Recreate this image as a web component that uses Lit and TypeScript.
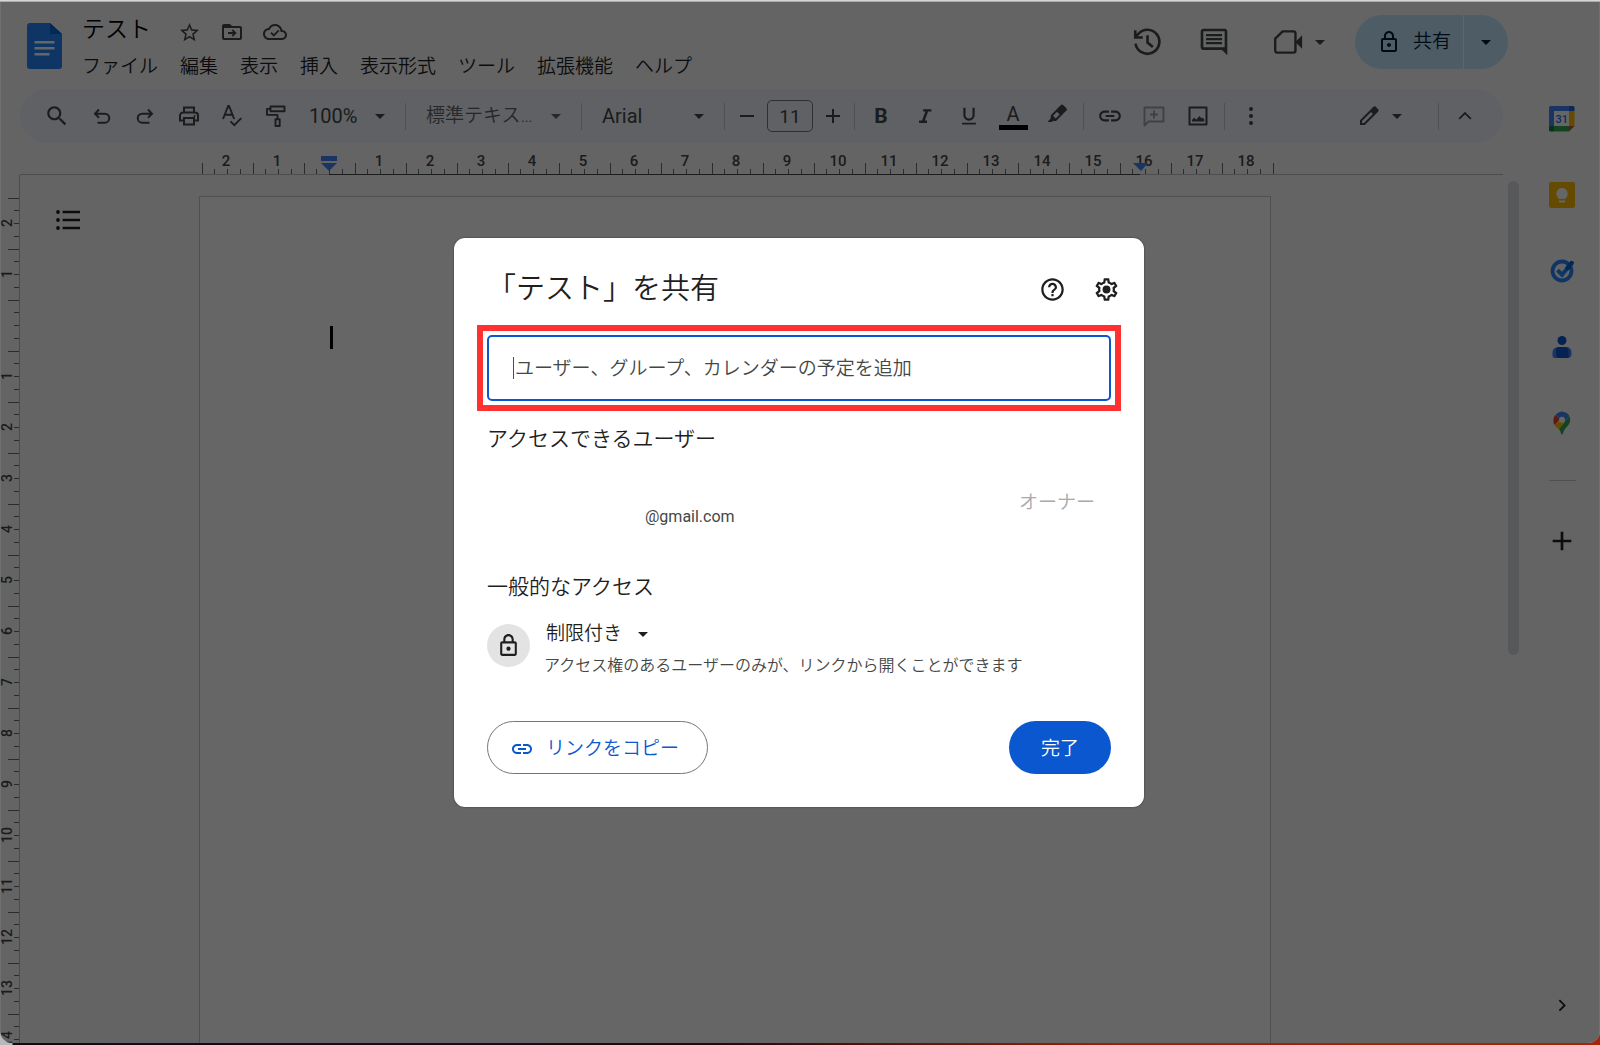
import { LitElement, html, css, svg, nothing } from "lit";
import type { SVGTemplateResult, TemplateResult } from "lit";
import { customElement } from "lit/decorators.js";

/* ---------- icon artwork, all on a 24-unit grid ---------- */

const glyphs: Record<string, SVGTemplateResult> = {
  star: svg`<path d="M22 9.24l-7.19-.62L12 2 9.19 8.63 2 9.24l5.46 4.73L5.82 21 12 17.27 18.18 21l-1.63-7.03L22 9.24zM12 15.4l-3.76 2.27 1-4.28-3.32-2.88 4.38-.38L12 6.1l1.71 4.04 4.38.38-3.32 2.88 1 4.28L12 15.4z"/>`,
  move: svg`<path d="M20 6h-8l-2-2H4c-1.1 0-2 .9-2 2v12c0 1.1.9 2 2 2h16c1.1 0 2-.9 2-2V8c0-1.1-.9-2-2-2zm0 12H4V8h16v10z"/><path class="line" stroke-width="1.8" d="M8 13h7M12.2 9.8l3.2 3.2-3.2 3.2"/>`,
  cloud: svg`<path d="M19.35 10.04C18.67 6.59 15.64 4 12 4 9.11 4 6.6 5.64 5.35 8.04 2.34 8.36 0 10.91 0 14c0 3.31 2.69 6 6 6h13c2.76 0 5-2.24 5-5 0-2.64-2.05-4.78-4.65-4.96zM19 18H6c-2.21 0-4-1.79-4-4 0-2.05 1.53-3.76 3.56-3.97l1.07-.11.5-.95C8.08 7.14 9.94 6 12 6c2.62 0 4.88 1.86 5.39 4.43l.3 1.5 1.53.11c1.56.1 2.78 1.41 2.78 2.96 0 1.65-1.35 3-3 3z"/><path class="line" stroke-width="1.8" d="M8 12.6l2.8 2.8 5-5"/>`,
  history: svg`<path class="line" stroke-width="2" d="M3.4 13.2A9 9 0 1 0 5.4 6L3.4 8.4M3.2 3.2v5.4h5.6M12.4 7v5.4l4 3.4"/>`,
  comment: svg`<path d="M21.99 4c0-1.1-.89-2-1.99-2H4c-1.1 0-2 .9-2 2v12c0 1.1.9 2 2 2h14l4 4-.01-18zM20 4v12H4V4h16zM6 12h12v1.6H6zm0-3h12v1.6H6zm0-3h12v1.6H6z"/>`,
  video: svg`<path class="line" stroke-width="1.8" stroke-linejoin="round" d="M8 4h8a1.6 1.6 0 0 1 1.6 1.6v12.8A1.6 1.6 0 0 1 16 20H4a1.6 1.6 0 0 1-1.600-1.600V9.500z"/><path d="M17.500 12L22.600 7v10z"/>`,
  lock: svg`<path d="M18 8h-1V6c0-2.76-2.24-5-5-5S7 3.24 7 6v2H6c-1.1 0-2 .9-2 2v10c0 1.1.9 2 2 2h12c1.1 0 2-.9 2-2V10c0-1.1-.9-2-2-2zM9 6c0-1.66 1.34-3 3-3s3 1.34 3 3v2H9V6zm9 14H6V10h12v10zm-6-3c1.1 0 2-.9 2-2s-.9-2-2-2-2 .9-2 2 .9 2 2 2z"/>`,
  caret: svg`<path d="M6 9.500h12l-6 6z"/>`,
  search: svg`<path d="M15.500 14h-.79l-.28-.27C15.410 12.590 16 11.110 16 9.500 16 5.910 13.090 3 9.500 3S3 5.910 3 9.500 5.910 16 9.500 16c1.610 0 3.090-.590 4.230-1.570l.27.28v.79l5 4.990L20.490 19l-4.990-5zm-6 0C7.010 14 5 11.990 5 9.500S7.010 5 9.500 5 14 7.010 14 9.500 11.990 14 9.500 14z"/>`,
  undo: svg`<path class="line" stroke-width="2" d="M10 5.500L6 9.700l4 4.200M6 9.700h9.800a4.400 4.400 0 0 1 0 9H8.500"/>`,
  redo: svg`<path class="line" stroke-width="2" d="M15 5.500l4 4.200-4 4.200M19 9.700H9.200a4.400 4.400 0 0 0 0 9h7.300"/>`,
  print: svg`<path class="line" stroke-width="2" d="M7 8.500V3.500h10v5M7 16.500H3v-5a3 3 0 0 1 3-3h12a3 3 0 0 1 3 3v5h-4M7 14h10v6.500H7z"/><circle cx="17.500" cy="12" r="1"/>`,
  spell: svg`<path class="line" stroke-width="1.900" d="M2 15L7.200 2h.8l5.200 13M4 10.800h7.200M9.500 17.300l3.800 3.800 7-7"/>`,
  roller: svg`<path class="line" stroke-width="1.900" stroke-linejoin="round" d="M5.500 2.500h14v4.800H5.500zM5.500 4.900H2v6h10.500v4.200M10.500 15.200h4.200v6.800h-4.200z"/>`,
  minus: svg`<path d="M5 11h14v2H5z"/>`,
  plus: svg`<path d="M19 13h-6v6h-2v-6H5v-2h6V5h2v6h6v2z"/>`,
  italic: svg`<path d="M10 4.500v2.600h2.400L8.800 16.900H5.500v2.600h8.700v-2.600h-2.400l3.600-9.800H19V4.500z"/>`,
  underline: svg`<path class="line" stroke-width="2.400" d="M7 3v8a5 5 0 0 0 10 0V3"/><path d="M4.500 19.300h15v1.900h-15z"/>`,
  marker: svg`<path fill-rule="evenodd" d="M15.600 1.200a2 2 0 0 1 2.800 0l2.800 2.800a2 2 0 0 1 0 2.800l-9.600 9.600a2 2 0 0 1-1.400.6H7.800L6.800 18H2.500l3.200-3.400v-2.300a2 2 0 0 1 .6-1.500zM12 7.800l-4 4 2.700 2.700 4-4z"/>`,
  link: svg`<path d="M3.900 12c0-1.710 1.390-3.100 3.100-3.100h4V7H7c-2.760 0-5 2.240-5 5s2.240 5 5 5h4v-1.900H7c-1.710 0-3.100-1.390-3.100-3.100zM8 13h8v-2H8v2zm9-6h-4v1.900h4c1.710 0 3.100 1.390 3.100 3.100s-1.390 3.100-3.100 3.100h-4V17h4c2.760 0 5-2.240 5-5s-2.240-5-5-5z"/>`,
  addComment: svg`<path class="line" stroke-width="1.900" stroke-linejoin="round" d="M2.500 21.500V3.500h19v14H6.500zM12 6.500v8M8 10.500h8"/>`,
  image: svg`<path class="line" stroke-width="2" stroke-linejoin="round" d="M3.500 3.500h17v17h-17z"/><path d="M6 17.500v-1.500l2.200-2.500 2 2.200 3.300-3.700 2.200 2.600 1-1 1.500 1.800v2.100z"/>`,
  more: svg`<circle cx="12" cy="5" r="2"/><circle cx="12" cy="12" r="2"/><circle cx="12" cy="19" r="2"/>`,
  pen: svg`<path fill-rule="evenodd" d="M3 21v-4.800L16.200 3a1.900 1.900 0 0 1 2.700 0l2.100 2.100a1.900 1.900 0 0 1 0 2.700L7.800 21zM5 19h2L15.900 10l-1.900-1.900L5 17z"/>`,
  up: svg`<path class="line" stroke-width="2.200" d="M5 15.500l7-7 7 7"/>`,
  right: svg`<path class="line" stroke-width="2.400" d="M8.500 5.500l7 7-7 7"/>`,
  outline: svg`<circle cx="2" cy="4" r="1.900"/><circle cx="2" cy="12" r="1.900"/><circle cx="2" cy="20" r="1.900"/><path d="M6.600 2.800H24v2.400H6.600zM6.600 10.800H24v2.400H6.600zM6.600 18.800H24v2.400H6.600z"/>`,
  help: svg`<path d="M11 18h2v-2h-2v2zm1-16C6.480 2 2 6.480 2 12s4.480 10 10 10 10-4.480 10-10S17.520 2 12 2zm0 18c-4.410 0-8-3.590-8-8s3.590-8 8-8 8 3.590 8 8-3.590 8-8 8zm0-14c-2.210 0-4 1.790-4 4h2c0-1.100.9-2 2-2s2 .9 2 2c0 2-3 1.750-3 5h2c0-2.250 3-2.500 3-5 0-2.210-1.790-4-4-4z"/>`,
  gear: svg`<path d="M19.430 12.980c.04-.32.07-.64.07-.98 0-.34-.03-.66-.07-.98l2.110-1.650c.19-.15.24-.42.12-.64l-2-3.460c-.09-.16-.26-.25-.44-.25-.06 0-.12.010-.17.030l-2.490 1c-.52-.4-1.080-.73-1.690-.98l-.38-2.650C14.460 2.180 14.250 2 14 2h-4c-.25 0-.46.18-.49.42l-.38 2.650c-.61.25-1.170.59-1.690.98l-2.490-1c-.06-.02-.12-.03-.18-.03-.17 0-.34.09-.43.25l-2 3.460c-.13.22-.07.49.12.64l2.110 1.650c-.04.32-.07.65-.07.98 0 .33.03.66.07.98l-2.110 1.650c-.19.15-.24.42-.12.64l2 3.460c.09.16.26.25.44.25.06 0 .12-.01.17-.03l2.490-1c.52.4 1.080.73 1.690.98l.38 2.650c.03.24.24.42.49.42h4c.25 0 .46-.18.49-.42l.38-2.650c.61-.25 1.170-.59 1.690-.98l2.490 1c.06.02.12.03.18.03.17 0 .34-.09.43-.25l2-3.460c.12-.22.07-.49-.12-.64l-2.110-1.650zm-1.980-1.710c.04.31.05.52.05.73 0 .21-.02.43-.05.73l-.14 1.130.89.7 1.080.84-.7 1.210-1.270-.51-1.040-.42-.9.68c-.43.32-.84.56-1.250.73l-1.060.43-.16 1.130-.2 1.350h-1.400l-.19-1.350-.16-1.130-1.060-.43c-.43-.18-.83-.41-1.230-.71l-.91-.7-1.060.43-1.270.51-.7-1.210 1.080-.84.89-.7-.14-1.130c-.03-.31-.05-.54-.05-.74s.02-.43.05-.73l.14-1.130-.89-.7-1.080-.84.7-1.210 1.270.51 1.040.42.9-.68c.43-.32.84-.56 1.250-.73l1.060-.43.16-1.130.2-1.350h1.390l.19 1.350.16 1.130 1.060.43c.43.18.83.41 1.230.71l.91.7 1.060-.43 1.270-.51.7 1.210-1.070.85-.89.7.14 1.130z"/><circle cx="12" cy="12" r="3.500"/>`,
};

const icon = (name: string, size = 24): TemplateResult => html`<svg
  class="icon" width=${size} height=${size} viewBox="0 0 24 24" aria-hidden="true">${glyphs[name]}</svg>`;

/* ---------- data ---------- */

const MENUS = ["ファイル", "編集", "表示", "挿入", "表示形式", "ツール", "拡張機能", "ヘルプ"];
const CM = 51;

const appIcons: { label: string; art: TemplateResult }[] = [
  {
    label: "カレンダー",
    art: html`<svg width="26" height="26" viewBox="0 0 26 26" aria-hidden="true">
      <path fill="#4285f4" d="M1.500 0h18.500v5H5v15H0V1.500A1.500 1.500 0 0 1 1.500 0z"/>
      <path fill="#1967d2" d="M20 0h4a1.500 1.500 0 0 1 1.500 1.500V5H20z"/>
      <path fill="#fbbc04" d="M20 5h5.500v15H20z"/>
      <path fill="#fff" d="M5 5h15v15H5z"/>
      <path fill="#34a853" d="M5 20h15v5.500H5z"/>
      <path fill="#188038" d="M0 20h5v5.500H1.500A1.500 1.500 0 0 1 0 24z"/>
      <path fill="#ea4335" d="M20 20h5.500L20 25.500z"/>
      <text x="12.700" y="16.800" text-anchor="middle" font-size="11" font-weight="500" fill="#1a73e8">31</text>
    </svg>`,
  },
  {
    label: "Keep",
    art: html`<svg width="26" height="26" viewBox="0 0 26 26" aria-hidden="true">
      <rect width="26" height="26" rx="2.500" fill="#fbbc04"/>
      <path fill="#fff" d="M13 6a5.700 5.700 0 0 1 3.400 10.200V17H9.600v-.8A5.700 5.700 0 0 1 13 6zM10 18.500h6v2h-6z"/>
    </svg>`,
  },
  {
    label: "ToDo リスト",
    art: html`<svg width="26" height="26" viewBox="0 0 26 26" aria-hidden="true">
      <circle cx="13" cy="13" r="9.500" fill="none" stroke="#2684fc" stroke-width="3.800"/>
      <path d="M8.500 12.200l4.500 4.500L21.500 6.500" fill="none" stroke="#2684fc" stroke-width="4"/>
      <path d="M18.500 10l4.200-5" stroke="#0066da" stroke-width="4.400" stroke-linecap="round"/>
    </svg>`,
  },
  {
    label: "連絡先",
    art: html`<svg width="26" height="26" viewBox="0 0 26 26" aria-hidden="true">
      <circle cx="13" cy="6.500" r="4.500" fill="#0b57d0"/>
      <path fill="#4f7df0" d="M9 13h8.500a5 5 0 0 1 5 5v2a4 4 0 0 1-4 4H5.500A2 2 0 0 1 3.500 22v-3.500A5.500 5.500 0 0 1 9 13z"/>
      <path fill="#0b57d0" d="M10.500 13h5a4 4 0 0 1 4 4v7h-9A3.500 3.500 0 0 1 7 20.500V16.500A3.500 3.500 0 0 1 10.500 13z"/>
    </svg>`,
  },
  {
    label: "マップ",
    art: html`<svg width="26" height="26" viewBox="0 0 26 26" aria-hidden="true">
      <path fill="#34a853" d="M20.300 6C21.800 9 21.400 12 19.700 14.500c-1.800 2.600-4.700 4.700-5.700 8.700-.4 1.600-1.700 1.600-2.100 0-.4-1.600-1.100-3-2-4.200z"/>
      <path fill="#fbbc04" d="M10.800 11.300l-5 4c1.100 1.700 2.800 2.800 4.100 4.200l5.400-6.700z"/>
      <path fill="#ea4335" d="M6.900 4.600A8.200 8.200 0 0 0 5.800 15.300l5.200-6z"/>
      <path fill="#4285f4" d="M6.900 4.600A8 8 0 0 1 20.300 6L15.500 11.700l-4.500-2.400z"/>
      <circle cx="13" cy="9.700" r="3" fill="#fff"/>
    </svg>`,
  },
];

@customElement("app-root")
export class AppRoot extends LitElement {
  static styles = css`
    :host {
      display: block;
      font-family: Roboto, "Noto Sans CJK JP", sans-serif;
      font-size: 19px;
      font-weight: 350;
      line-height: 24px;
      color: #1f1f1f;
    }
    * { box-sizing: border-box; }
    button, select, input {
      margin: 0;
      padding: 0;
      border: 0;
      background: none;
      font: inherit;
      color: inherit;
      outline: none;
    }
    button { display: inline-flex; align-items: center; justify-content: center; }
    a { color: inherit; text-decoration: none; }
    .icon { display: block; flex: none; fill: currentColor; }
    .line { fill: none; stroke: currentColor; }

    .desk {
      height: 100vh;
      display: flex;
      flex-direction: column;
      padding-bottom: 2px;
      background: linear-gradient(90deg, #b9b9bd 12px, #1c0614 13px, #2a0612 45%, #a02008 70%, #a82408);
    }
    .strip { flex: none; height: 2px; background: linear-gradient(#d4d7d8 50%, #a9abac 50%); }
    .window {
      flex: 1;
      min-height: 0;
      position: relative;
      display: grid;
      grid-template-columns: minmax(0, 1fr) 76px;
      overflow: hidden;
      border-radius: 0 0 12px 12px;
      background: #f9fbfd;
    }
    .main { display: flex; flex-direction: column; min-height: 0; }

    /* title bar */
    .header {
      display: flex;
      align-items: flex-start;
      height: 87px;
      padding: 13px 16px 0 27px;
    }
    .logo { display: block; margin: 8px 20px 0 0; }
    .titles { flex: 1; }
    .title-row { display: flex; align-items: center; gap: 19px; height: 34px; }
    .title { margin: 0 8px 4px 0; font-size: 23px; line-height: 28px; font-weight: 350; color: #000; }
    .title-row button { color: #444746; }
    .menus { display: flex; gap: 22px; margin-top: 6px; }
    .actions { display: flex; align-items: center; height: 54px; color: #444746; }
    .actions .round { width: 67px; }
    .meet { gap: 6px; width: 80px; margin-left: 14px; }
    .share {
      display: flex;
      height: 54px;
      margin-left: 14px;
      color: #001d35;
    }
    .share button { background: #c2e7ff; height: 54px; }
    .share .go { width: 108px; gap: 12px; border-radius: 27px 0 0 27px; padding-left: 10px; }
    .share .opts { width: 44px; margin-left: 1px; border-radius: 0 27px 27px 0; }

    /* toolbar */
    .toolbar {
      display: flex;
      align-items: center;
      flex: none;
      height: 54px;
      margin: 0 21px 0 20px;
      padding: 0 16px 0 15px;
      border-radius: 27px;
      background: #edf2fa;
      color: #444746;
    }
    .tool { width: 44px; height: 40px; flex: none; }
    .tool.off { color: #a0a3a5; }
    .bold { font-size: 21px; font-weight: 700; }
    .ink { flex-direction: column; font-size: 20px; line-height: 22px; font-weight: 400; }
    .ink-bar { width: 29px; height: 5px; background: #000; }
    .step { width: 24px; height: 32px; flex: none; }
    .rule { flex: none; width: 1px; height: 27px; margin: 0 10px; background: #c7c7c7; }
    .rule.near { margin: 0 4px; }
    .rule.turn { margin: 0 4px 0 9px; }
    .size {
      width: 46px;
      height: 32px;
      margin: 0 8px;
      border: 1px solid #747775;
      border-radius: 5px;
      text-align: center;
      font-weight: 400;
    }
    .push { flex: 1; }
    .mode { gap: 6px; margin-right: 27px; }

    .pick { display: grid; align-items: center; flex: none; }
    .pick select {
      grid-area: 1 / 1;
      appearance: none;
      height: 32px;
      line-height: 32px;
      padding-left: 10px;
    }
    .pick .icon { grid-area: 1 / 1; justify-self: end; margin-right: 5px; pointer-events: none; }
    .pick.zoom { width: 96px; font-size: 20px; font-weight: 400; }
    .pick.para { width: 155px; color: #5f6264; }
    .pick.face { width: 122px; font-size: 20px; font-weight: 400; }
    .pick.scope { width: 114px; }
    .pick.scope select { height: 24px; line-height: 24px; padding-left: 2px; }

    /* rulers and page */
    .ruler-row {
      display: flex;
      justify-content: center;
      flex: none;
      height: 32px;
      margin: 0 21px 0 20px;
      padding-right: 53px;
      border-bottom: 1px solid #bdbfc1;
    }
    .ruler { display: block; flex: none; overflow: visible; font-size: 15px; font-weight: 500; fill: #444746; }
    .work { flex: 1; min-height: 0; display: flex; overflow: hidden; }
    .side-ruler { width: 20px; flex: none; overflow: hidden; border-right: 1px solid #bdbfc1; }
    .side-ruler .ruler { font-size: 14px; }
    .canvas { flex: 1; display: flex; padding-right: 53px; }
    .gutter { flex: 1; min-width: 0; }
    .outline { margin: 33px 0 0 36px; }
    .page {
      flex: none;
      width: 1072px;
      margin-top: 21px;
      padding: 129px 0 0 130px;
      border: 1px solid #c7c7c7;
      border-bottom: 0;
      background: #fff;
    }
    .cursor { width: 3px; height: 23px; background: #000; }
    .scroll { width: 21px; flex: none; padding: 6px 5px 0; }
    .thumb { height: 55%; width: 11px; border-radius: 6px; background: #dadce0; }

    /* side panel */
    .panel { display: flex; flex-direction: column; align-items: center; padding-top: 79px; }
    .panel button { width: 60px; height: 76px; flex: none; }
    .panel svg { display: block; }
    .panel hr { width: 27px; height: 1px; margin: 19px 0 22px; border: 0; background: #c7c7c7; }
    .panel .fill { flex: 1; }

    /* share dialog */
    .shade {
      position: absolute;
      inset: 0;
      display: flex;
      align-items: center;
      justify-content: center;
      padding-right: 2px;
      background: rgba(0, 0, 0, 0.6);
      box-shadow: inset 1px 0 rgba(255, 255, 255, 0.08), inset -1px 0 rgba(255, 255, 255, 0.08);
    }
    .dialog {
      width: 690px;
      padding: 33px;
      border-radius: 11px;
      background: #fff;
      box-shadow: 0 0 2px rgba(0, 0, 0, 0.5);
    }
    .dialog-head { display: flex; align-items: center; height: 36px; margin-right: -9px; }
    .dialog-title { flex: 1; margin: 0; font-size: 29px; line-height: 36px; font-weight: 350; }
    .dialog-head button { width: 28px; height: 28px; margin-left: 26px; }
    .callout { position: relative; margin: 18px -10px 0; padding: 4px; border: 6px solid #ff3131; }
    .people {
      display: block;
      width: 100%;
      height: 66px;
      padding: 0 26px;
      border: 2px solid #0b57d0;
      border-radius: 5px;
      caret-color: transparent;
    }
    .people::placeholder { color: #444746; opacity: 1; }
    .caret-bar { position: absolute; left: 30px; top: 26px; width: 1px; height: 22px; background: #0b57d0; }
    .section { margin: 14px 0 0; font-size: 21px; line-height: 28px; font-weight: 350; }
    .owner-row {
      display: flex;
      justify-content: space-between;
      padding: 38px 16px 30px 158px;
    }
    .mail { margin-top: 14px; font-size: 16px; color: #444746; font-weight: 400; }
    .role { color: #a8a9aa; }
    .access { display: flex; gap: 14px; margin-top: 21px; }
    .badge {
      display: flex;
      align-items: center;
      justify-content: center;
      width: 43px;
      height: 43px;
      margin-top: 2px;
      border-radius: 50%;
      background: #e3e3e3;
    }
    .note { margin: 8px 0 0; font-size: 16px; color: #444746; }
    .foot { display: flex; justify-content: space-between; margin-top: 43px; }
    .foot button { height: 53px; border-radius: 27px; }
    .foot .copy { gap: 12px; padding: 2px 28px 0 22px; border: 1px solid #747775; color: #0b57d0; }
    .foot .done { width: 102px; padding-top: 2px; background: #0b57d0; color: #fff; }
  `;

  private horizontalRuler() {
    const zero = 130;
    const marks = Array.from({ length: 85 }, (_, i) => i - 10);
    return svg`<svg class="ruler" width="1072" height="32" aria-hidden="true">
      ${marks.map((q) => {
        const x = Math.round(zero + (q * CM) / 4);
        const half = Math.abs(q % 4) === 2;
        return svg`<rect x=${x} y=${half ? 20 : 26} width="1" height=${half ? 11 : 5} fill="#6d6f71"></rect>
          ${q % 4 === 0 && q !== 0
            ? svg`<text x=${x - 1} y="23" text-anchor="middle">${Math.abs(q / 4)}</text>`
            : nothing}`;
      })}
      <rect x="130" y="31" width="811" height="1" fill="#444746"></rect>
      <path fill="#4285f4" d="M122 13h16v5h-16zM122 20h16l-8 8zM934 20h15l-7 8z"/>
    </svg>`;
  }

  private verticalRuler() {
    const zero = 150;
    const marks = Array.from({ length: 68 }, (_, i) => i - 10);
    return svg`<svg class="ruler" width="20" height="900" aria-hidden="true">
      ${marks.map((q) => {
        const y = Math.round(zero + (q * CM) / 4);
        const half = Math.abs(q % 4) === 2;
        return svg`<rect x=${half ? 8 : 14} y=${y} width=${half ? 11 : 5} height="1" fill="#6d6f71"></rect>
          ${q % 4 === 0 && q !== 0
            ? svg`<text transform="translate(12 ${y}) rotate(-90)" text-anchor="middle">${Math.abs(q / 4)}</text>`
            : nothing}`;
      })}
      <rect x="19" y="150" width="1" height="750" fill="#444746"></rect>
    </svg>`;
  }

  private tool(name: string, label: string, size = 24, cls = "") {
    return html`<button class="tool ${cls}" aria-label=${label}>${icon(name, size)}</button>`;
  }

  private pick(cls: string, label: string, value: string) {
    return html`<label class="pick ${cls}">
      <select aria-label=${label}><option>${value}</option></select>${icon("caret", 20)}
    </label>`;
  }

  private renderHeader() {
    return html`<header class="header">
      <svg class="logo" width="35" height="46" viewBox="0 0 35 46" aria-hidden="true">
        <path fill="#2684fc" d="M3 0h20l12 11v32a3 3 0 0 1-3 3H3a3 3 0 0 1-3-3V3a3 3 0 0 1 3-3z"/>
        <path fill="#0066da" d="M23 0l12 11H23z"/>
        <path fill="#fff" d="M7.500 18h20v2.500h-20zM7.500 24h20v2.500h-20zM7.500 30h15v2.500h-15z"/>
      </svg>
      <div class="titles">
        <div class="title-row">
          <h1 class="title">テスト</h1>
          <button aria-label="スターを付ける">${icon("star", 23)}</button>
          <button aria-label="移動">${icon("move", 24)}</button>
          <button aria-label="保存状況">${icon("cloud", 24)}</button>
        </div>
        <nav class="menus">${MENUS.map((m) => html`<a href="#">${m}</a>`)}</nav>
      </div>
      <div class="actions">
        <button class="round" aria-label="変更履歴">${icon("history", 32)}</button>
        <button class="round" aria-label="コメント">${icon("comment", 32)}</button>
        <button class="meet" aria-label="通話">${icon("video", 32)}${icon("caret", 20)}</button>
        <div class="share">
          <button class="go">${icon("lock", 24)}<span>共有</span></button>
          <button class="opts" aria-label="共有オプション">${icon("caret", 20)}</button>
        </div>
      </div>
    </header>`;
  }

  private renderToolbar() {
    return html`<div class="toolbar" role="toolbar">
      ${this.tool("search", "検索", 26)}
      ${this.tool("undo", "元に戻す")}
      ${this.tool("redo", "やり直す")}
      ${this.tool("print", "印刷")}
      ${this.tool("spell", "スペルチェック")}
      ${this.tool("roller", "書式を貼り付け")}
      ${this.pick("zoom", "ズーム", "100%")}
      <span class="rule"></span>
      ${this.pick("para", "スタイル", "標準テキス…")}
      <span class="rule"></span>
      ${this.pick("face", "フォント", "Arial")}
      <span class="rule"></span>
      <button class="step" aria-label="縮小">${icon("minus", 24)}</button>
      <input class="size" aria-label="フォントサイズ" value="11" />
      <button class="step" aria-label="拡大">${icon("plus", 24)}</button>
      <span class="rule turn"></span>
      <button class="tool bold" aria-label="太字">B</button>
      ${this.tool("italic", "斜体", 22)}
      ${this.tool("underline", "下線", 22)}
      <button class="tool ink" aria-label="文字色">A<span class="ink-bar"></span></button>
      ${this.tool("marker", "ハイライト")}
      <span class="rule near"></span>
      ${this.tool("link", "リンク", 26)}
      ${this.tool("addComment", "コメントを追加", 24, "off")}
      ${this.tool("image", "画像")}
      <span class="rule near"></span>
      ${this.tool("more", "その他")}
      <span class="push"></span>
      <button class="mode" aria-label="編集モード">${icon("pen", 24)}${icon("caret", 20)}</button>
      <span class="rule near"></span>
      ${this.tool("up", "メニューを隠す", 20)}
    </div>`;
  }

  private renderPanel() {
    return html`<aside class="panel">
      ${appIcons.map((a) => html`<button aria-label=${a.label}>${a.art}</button>`)}
      <hr />
      <button aria-label="アドオンを取得">${icon("plus", 32)}</button>
      <span class="fill"></span>
      <button aria-label="サイドパネルを隠す">${icon("right", 18)}</button>
    </aside>`;
  }

  private renderDialog() {
    return html`<div class="shade">
      <section class="dialog" role="dialog" aria-labelledby="share-title">
        <div class="dialog-head">
          <h2 class="dialog-title" id="share-title">「テスト」を共有</h2>
          <button aria-label="ヘルプ">${icon("help", 27)}</button>
          <button aria-label="設定">${icon("gear", 27)}</button>
        </div>
        <div class="callout">
          <input class="people" aria-label="ユーザーを追加"
            placeholder="ユーザー、グループ、カレンダーの予定を追加" />
          <span class="caret-bar"></span>
        </div>
        <h3 class="section">アクセスできるユーザー</h3>
        <div class="owner-row">
          <span class="mail">@gmail.com</span>
          <span class="role">オーナー</span>
        </div>
        <h3 class="section">一般的なアクセス</h3>
        <div class="access">
          <span class="badge">${icon("lock", 25)}</span>
          <div>
            ${this.pick("scope", "アクセス範囲", "制限付き")}
            <p class="note">アクセス権のあるユーザーのみが、リンクから開くことができます</p>
          </div>
        </div>
        <div class="foot">
          <button class="copy">${icon("link", 24)}<span>リンクをコピー</span></button>
          <button class="done">完了</button>
        </div>
      </section>
    </div>`;
  }

  render() {
    return html`<div class="desk">
      <div class="strip"></div>
      <div class="window">
        <div class="main">
          ${this.renderHeader()} ${this.renderToolbar()}
          <div class="ruler-row">${this.horizontalRuler()}</div>
          <div class="work">
            <div class="side-ruler">${this.verticalRuler()}</div>
            <div class="canvas">
              <div class="gutter">
                <button class="outline" aria-label="概要を表示">${icon("outline", 24)}</button>
              </div>
              <div class="page"><div class="cursor"></div></div>
              <div class="gutter"></div>
            </div>
            <div class="scroll"><div class="thumb"></div></div>
          </div>
        </div>
        ${this.renderPanel()}
        ${this.renderDialog()}
      </div>
    </div>`;
  }
}
